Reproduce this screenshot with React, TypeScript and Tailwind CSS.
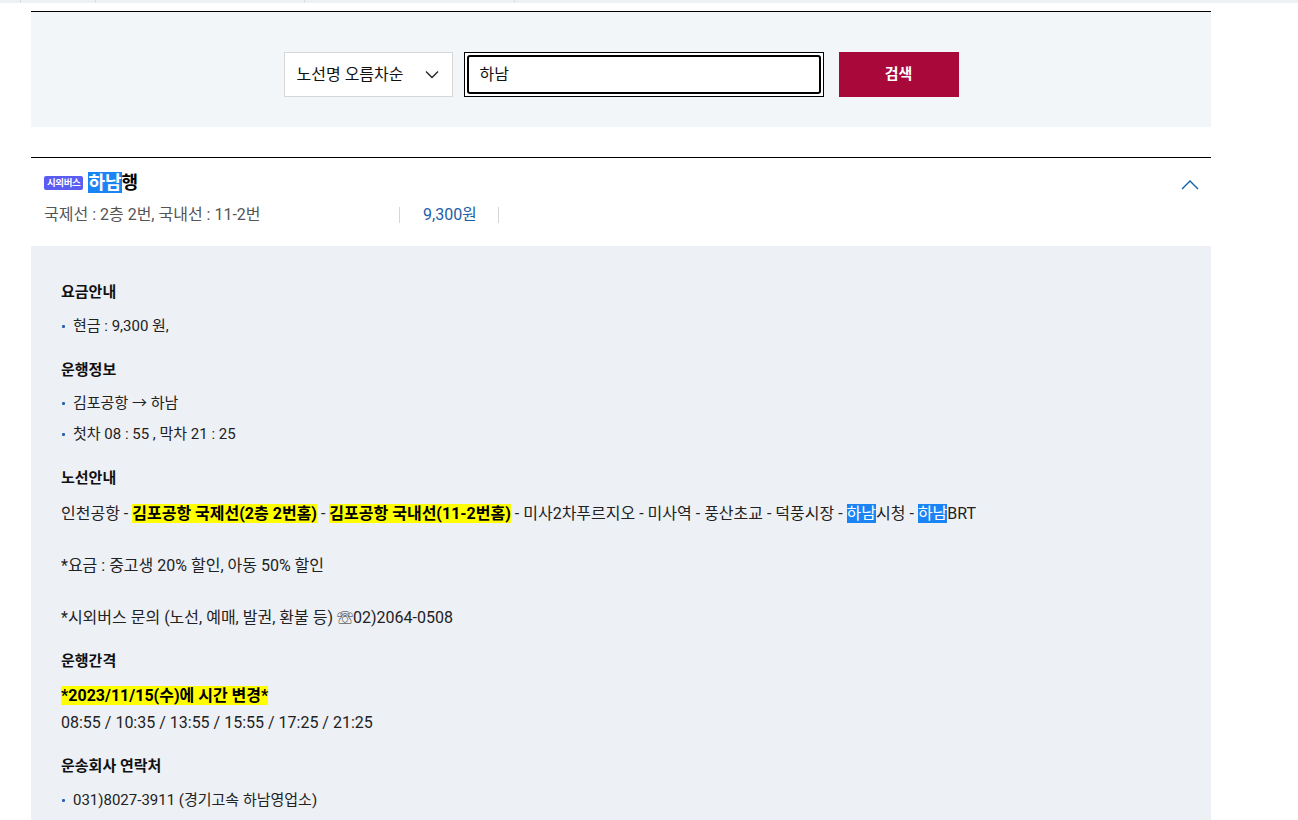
import React from "react";

const font = { fontFamily: 'Roboto, "Noto Sans CJK KR", sans-serif' };

function Bullet({ children }: { children: React.ReactNode }) {
  return (
    <div className="flex items-center leading-[22px]">
      <span className="w-[3px] h-[3px] rounded-[1px] bg-[#2a64b0] ml-[1px] mr-[8px]" />
      <span>{children}</span>
    </div>
  );
}

const Hl = ({ children }: { children: React.ReactNode }) => (
  <span className="bg-[#1b84f5] text-white">{children}</span>
);
const Yl = ({ children }: { children: React.ReactNode }) => (
  <span className="bg-[#ffff00] font-bold text-black">{children}</span>
);

export default function App() {
  return (
    <div className="w-[1298px] h-[820px] bg-white overflow-hidden text-[#222]" style={font}>
      {/* top strip */}
      <div className="h-[3px] bg-[#edf1f5] flex">
        <div className="w-[21px] border-r border-[#d9dde3]" />
        <div className="w-[75px] border-r border-[#d9dde3]" />
        <div className="w-[209px] border-r border-[#d9dde3]" />
        <div className="w-[210px] border-r border-[#d9dde3]" />
      </div>
      <div className="ml-[31px] w-[1180px]">
        {/* search */}
        <div className="mt-[8px] border-t border-black bg-[#f3f6f9] pt-[40px] pb-[30px] flex justify-center">
          <div className="flex items-center">
            <div className="w-[169px] h-[45px] border border-[#d7d7d7] bg-white flex items-center justify-between pl-[12px] pr-[13px]">
              <span className="text-[16px] text-[#111]">노선명 오름차순</span>
              <svg width="14" height="9" viewBox="0 0 14 9" fill="none">
                <path d="M1 1.5 L7 7.5 L13 1.5" stroke="#222" strokeWidth="1.3" />
              </svg>
            </div>
            <div className="ml-[11px] w-[360px] h-[45px] border border-black bg-white p-[2px]">
              <div className="w-full h-full border-2 border-black rounded-[3px] flex items-center pl-[11px] text-[16px] text-[#111]">
                하남
              </div>
            </div>
            <div className="ml-[15px] w-[120px] h-[45px] bg-[#a8083a] text-white font-bold text-[15px] flex items-center justify-center">
              검색
            </div>
          </div>
        </div>

        {/* header */}
        <div className="mt-[30px] border-t border-black h-[89px] pl-[13px] pr-[12px] flex justify-between">
          <div>
            <div className="mt-[14px] flex items-center h-[22px]">
              <span className="bg-[#5b5cf2] text-white text-[9.5px] font-bold leading-[14px] px-[3px] rounded-[2px] tracking-[-0.4px]">시외버스</span>
              <span className="ml-[5px] text-[18px] font-bold leading-[22px]">
                <Hl>하남</Hl>
                <span className="text-black">행</span>
              </span>
            </div>
            <div className="mt-[10px] flex items-center text-[16px] leading-[22px]">
              <span className="w-[355px] text-[#555]">국제선 : 2층 2번, 국내선 : 11-2번</span>
              <span className="w-px h-[16px] bg-[#d6d6d6]" />
              <span className="w-[98px] pl-[23px] text-[#1e5ea6]">9,300원</span>
              <span className="w-px h-[16px] bg-[#d6d6d6]" />
            </div>
          </div>
          <div className="pt-[22px]">
            <svg width="18" height="10" viewBox="0 0 18 10" fill="none">
              <path d="M1 9 L9 1 L17 9" stroke="#1060a8" strokeWidth="1.4" />
            </svg>
          </div>
        </div>

        {/* detail panel */}
        <div className="bg-[#edf0f5] pl-[30px] pt-[35px] pb-[40px] text-[15px] text-[#222]">
          <div className="font-bold text-[#111] leading-[22px]">요금안내</div>
          <div className="mt-[12px]">
            <Bullet>현금 : 9,300 원,</Bullet>
          </div>

          <div className="mt-[22px] font-bold text-[#111] leading-[22px]">운행정보</div>
          <div className="mt-[11px]">
            <Bullet>김포공항 → 하남</Bullet>
          </div>
          <div className="mt-[9px]">
            <Bullet>첫차 08 : 55 , 막차 21 : 25</Bullet>
          </div>

          <div className="mt-[22px] font-bold text-[#111] leading-[22px]">노선안내</div>
          <div className="mt-[12px] leading-[26px] text-[16px]">
            인천공항 - <Yl>김포공항 국제선(2층 2번홈)</Yl> - <Yl>김포공항 국내선(11-2번홈)</Yl> - 미사2차푸르지오 - 미사역 - 풍산초교 - 덕풍시장 - <Hl>하남</Hl>시청 - <Hl>하남</Hl>BRT
            <br />
            <br />
            *요금 : 중고생 20% 할인, 아동 50% 할인
            <br />
            <br />
            *시외버스 문의 (노선, 예매, 발권, 환불 등) ☏02)2064-0508
          </div>

          <div className="mt-[19px] font-bold text-[#111] leading-[22px]">운행간격</div>
          <div className="mt-[10px] leading-[27px] text-[16px]">
            <Yl>*2023/11/15(수)에 시간 변경*</Yl>
            <br />
            08:55 / 10:35 / 13:55 / 15:55 / 17:25 / 21:25
          </div>

          <div className="mt-[19px] font-bold text-[#111] leading-[22px]">운송회사 연락처</div>
          <div className="mt-[12px]">
            <Bullet>031)8027-3911 (경기고속 하남영업소)</Bullet>
          </div>
        </div>
      </div>
    </div>
  );
}
